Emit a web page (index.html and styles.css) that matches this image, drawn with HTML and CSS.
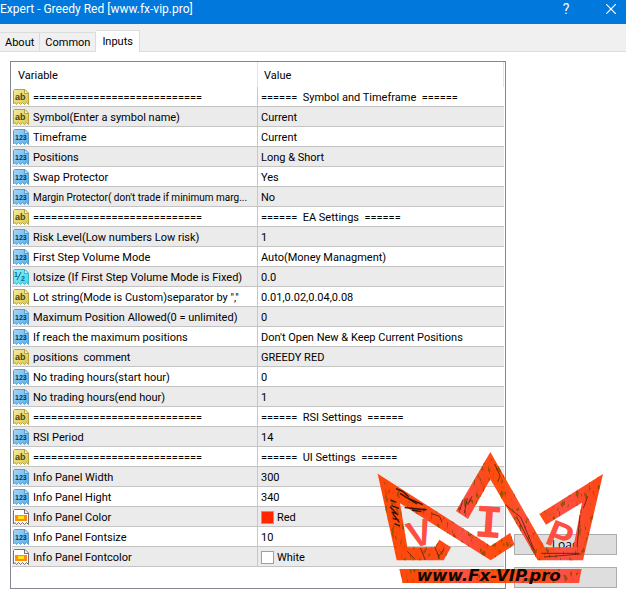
FILE: index.html
```html
<!DOCTYPE html>
<html lang="en">
<head>
<meta charset="utf-8">
<title>Expert - Greedy Red</title>
<link rel="stylesheet" href="styles.css">
</head>
<body>
<svg class="defs" aria-hidden="true">
  <defs>
    <linearGradient id="gy" x2="1" y2="1"><stop offset="0" stop-color="#f3eba0"/><stop offset="1" stop-color="#dcc64a"/></linearGradient>
    <linearGradient id="gb" x2="1" y2="1"><stop offset="0" stop-color="#a5d8fa"/><stop offset="1" stop-color="#55aee9"/></linearGradient>
    <linearGradient id="gc" x2="1" y2="1"><stop offset="0" stop-color="#8eeefa"/><stop offset="1" stop-color="#3fd6f2"/></linearGradient>
    <symbol id="ab" viewBox="0 0 16 16">
      <path d="M1.500 .5H12L15.500 4V15.500L13.500 13.500L11.500 15.500L9.500 13.500L7.500 15.500L5.500 13.500L3.500 15.500L2 13.500L.5 15V1.500Z" fill="url(#gy)" stroke="#b8a43c"/>
      <path d="M11.500 1V4.500H15" fill="#fbf6c5" stroke="#b8a43c"/>
      <text x="2" y="11" class="glyph brown">ab</text>
    </symbol>
    <symbol id="int" viewBox="0 0 16 16">
      <path d="M1.500 .5H12L15.500 4V15.500L13.500 13.500L11.500 15.500L9.500 13.500L7.500 15.500L5.500 13.500L3.500 15.500L2 13.500L.5 15V1.500Z" fill="url(#gb)" stroke="#5c9cc9"/>
      <path d="M11.500 1V4.500H15" fill="#c5e7fc" stroke="#5c9cc9"/>
      <text x="2" y="11" class="glyph navy">123</text>
    </symbol>
    <symbol id="dbl" viewBox="0 0 16 16">
      <path d="M1.500 .5H12L15.500 4V15.500L13.500 13.500L11.500 15.500L9.500 13.500L7.500 15.500L5.500 13.500L3.500 15.500L2 13.500L.5 15V1.500Z" fill="url(#gc)" stroke="#40b4cc"/>
      <path d="M11.500 1V4.500H15" fill="#c8f8fd" stroke="#40b4cc"/>
      <text x="1" y="8" class="glyph teal">1</text><path d="M4 11L8 3" stroke="#0a6780"/><text x="8" y="12" class="glyph teal">2</text>
    </symbol>
    <symbol id="col" viewBox="0 0 16 16">
      <path d="M1.500 .5H12L15.500 4V15.500L13.500 13.500L11.500 15.500L9.500 13.500L7.500 15.500L5.500 13.500L3.500 15.500L2 13.500L.5 15V1.500Z" fill="#fff" stroke="#777070"/>
      <path d="M11.500 1V4.500H15" fill="#eee" stroke="#777070"/>
      <path d="M2 6H14V12H2Z" fill="#ff8d0a"/><path d="M5 7H11V10H5Z" fill="#ffe21a"/>
    </symbol>
  </defs>
</svg>

<header class="titlebar">
  <h1>Expert - Greedy Red [www.fx-vip.pro]</h1>
  <button type="button" class="help" aria-label="Help">?</button>
  <button type="button" class="close" aria-label="Close"><svg viewBox="0 0 10 10"><path d="M0 0L10 10M10 0L0 10" stroke="#fff" stroke-width="1.200"/></svg></button>
</header>
<nav class="tabs" role="tablist">
  <button type="button" role="tab">About</button>
  <button type="button" role="tab">Common</button>
  <button type="button" role="tab" class="active" aria-selected="true">Inputs</button>
</nav>

<main>
  <div class="panel">
    <table>
      <thead><tr><th>Variable</th><th>Value</th></tr></thead>
      <tbody>
        <tr><td><svg><use href="#ab"/></svg>============================</td><td>======  Symbol and Timeframe  ======</td></tr>
        <tr><td><svg><use href="#ab"/></svg>Symbol(Enter a symbol name)</td><td>Current</td></tr>
        <tr><td><svg><use href="#int"/></svg>Timeframe</td><td>Current</td></tr>
        <tr><td><svg><use href="#int"/></svg>Positions</td><td>Long &amp; Short</td></tr>
        <tr><td><svg><use href="#int"/></svg>Swap Protector</td><td>Yes</td></tr>
        <tr><td><svg><use href="#int"/></svg><span class="long">Margin Protector( don't trade if minimum marg...</span></td><td>No</td></tr>
        <tr><td><svg><use href="#ab"/></svg>============================</td><td>======  EA Settings  ======</td></tr>
        <tr><td><svg><use href="#int"/></svg>Risk Level(Low numbers Low risk)</td><td>1</td></tr>
        <tr><td><svg><use href="#int"/></svg>First Step Volume Mode</td><td>Auto(Money Managment)</td></tr>
        <tr><td><svg><use href="#dbl"/></svg>lotsize (If First Step Volume Mode is Fixed)</td><td>0.0</td></tr>
        <tr><td><svg><use href="#ab"/></svg>Lot string(Mode is Custom)separator by ","</td><td>0.01,0.02,0.04,0.08</td></tr>
        <tr><td><svg><use href="#int"/></svg>Maximum Position Allowed(0 = unlimited)</td><td>0</td></tr>
        <tr><td><svg><use href="#int"/></svg>If reach the maximum positions</td><td>Don't Open New &amp; Keep Current Positions</td></tr>
        <tr><td><svg><use href="#ab"/></svg>positions  comment</td><td>GREEDY RED</td></tr>
        <tr><td><svg><use href="#int"/></svg>No trading hours(start hour)</td><td>0</td></tr>
        <tr><td><svg><use href="#int"/></svg>No trading hours(end hour)</td><td>1</td></tr>
        <tr><td><svg><use href="#ab"/></svg>============================</td><td>======  RSI Settings  ======</td></tr>
        <tr><td><svg><use href="#int"/></svg>RSI Period</td><td>14</td></tr>
        <tr><td><svg><use href="#ab"/></svg>============================</td><td>======  UI Settings  ======</td></tr>
        <tr><td><svg><use href="#int"/></svg>Info Panel Width</td><td>300</td></tr>
        <tr><td><svg><use href="#int"/></svg>Info Panel Hight</td><td>340</td></tr>
        <tr><td><svg><use href="#col"/></svg>Info Panel Color</td><td><i class="swatch red"></i>Red</td></tr>
        <tr><td><svg><use href="#int"/></svg>Info Panel Fontsize</td><td>10</td></tr>
        <tr><td><svg><use href="#col"/></svg>Info Panel Fontcolor</td><td><i class="swatch"></i>White</td></tr>
      </tbody>
    </table>
  </div>
  <aside class="actions">
    <button type="button">Load</button>
    <button type="button" aria-label="Save"></button>
  </aside>

  <svg class="crown" viewBox="0 0 768 471" role="img" aria-label="VIP crown">
    <defs>
      <filter id="worn" x="0" y="0" width="1" height="1">
        <feTurbulence type="fractalNoise" baseFrequency=".11 .04" numOctaves="4" seed="8" result="n"/>
        <feColorMatrix in="n" values="0 0 0 0 .35  0 0 0 0 .08  0 0 0 0 0  9 0 0 0 -5.400" result="d"/>
        <feComposite in="d" in2="SourceGraphic" operator="in" result="m"/>
        <feMerge><feMergeNode in="SourceGraphic"/><feMergeNode in="m"/></feMerge>
      </filter>
      <linearGradient id="flame" gradientUnits="userSpaceOnUse" x1="20" y1="0" x2="700" y2="0">
        <stop offset="0" stop-color="#ff4708"/><stop offset=".28" stop-color="#ff4a16"/><stop offset=".38" stop-color="#ff5046"/><stop offset=".47" stop-color="#ff4a20"/><stop offset=".55" stop-color="#ff4e08"/><stop offset=".65" stop-color="#ff4f42"/><stop offset=".72" stop-color="#ff4a10"/><stop offset=".82" stop-color="#ff5048"/><stop offset="1" stop-color="#ff4510"/>
      </linearGradient>
    </defs>
    <g filter="url(#worn)" fill="url(#flame)">
      <path d="M23 101L362 318L420 279L434 314L362 361L90 190L112 322H195L208 299L243 322L221 361H80Z"/>
      <path d="M361 36L524 322H610L636 188L528 254L508 222L699 102L639 361H503L361 118L294 237L258 213Z"/>
      <path d="M88 387H635L627 429H98Z"/>
    </g>
    <g stroke="#35130a" fill="none" stroke-width="2">
      <path d="M78 146L98 154L116 170M90 160L141 192M120 204L166 210M104 170L158 194M104 203L170 209M126 210L154 215" stroke-width="4"/>
      <path d="M61 180L79 187M64 197L87 205M65 216L85 223M68 235L86 240M73 251L90 258M60 200L84 225M68 220L88 247" stroke-width="4"/>
      <path d="M185 221L209 229L216 247M151 324L166 360M194 320L209 356M222 328L205 350M112 334L135 358M374 72L390 107L384 125M406 194L453 233L493 331M440 230L488 326M278 179L270 211M292 174L283 219M306 169L293 195M514 340H628M522 351L632 342M630 225L621 320M653 169L640 205"/>
    </g>
    <g fill="#ff4e42" class="vip">
      <text transform="translate(124 327) rotate(-16)">V</text>
      <text x="315" y="292" class="slab" transform="rotate(4 360 240)">I</text>
      <text transform="translate(521 308) rotate(22)">P</text>
    </g>
    <text x="140" y="423" class="site">www.Fx-VIP.pro</text>
  </svg>
</main>
</body>
</html>
```
FILE: styles.css
```css
* { box-sizing: border-box; }
body { margin: 0; background: #fff; color: #000; font: 11px/16px Roboto, "Liberation Sans", sans-serif; }
button { font: inherit; color: inherit; padding: 0; border: 0; }
.defs { position: absolute; width: 0; height: 0; }
.titlebar { display: flex; height: 24px; background: #0078dc; color: #fff; }
.titlebar h1 { flex: 1; margin: 0; font: 12px/18px Roboto, sans-serif; }
.titlebar button { width: 30px; height: 18px; background: none; }
.titlebar .help { margin-right: 15px; font-size: 14px; }
.titlebar .close svg { display: block; width: 10px; height: 10px; margin: 0 auto; }
.tabs { display: flex; align-items: flex-end; height: 28px; background: #f0f0f0; border-bottom: 1px solid #dcdcdc; }
.tabs button { height: 19px; padding: 2px 5px 0; border: 1px solid #dcdcdc; border-width: 1px 1px 0 0; background: #f0f0f0; }
.tabs .active { height: 22px; margin-bottom: -1px; padding: 0 6px; background: #fff; }
main { position: relative; display: grid; grid-template-columns: 1fr 103px; gap: 8px; padding: 9px 9px 8px 10px; }
.panel { border: 1px solid #828790; padding: 0 1px 21px; }
table { width: 100%; table-layout: fixed; border-collapse: separate; border-spacing: 0; }
th { height: 25px; padding: 2px 6px 0; text-align: left; font-weight: normal; border-right: 1px solid #e5e5e5; }
th:first-child { width: 246px; }
td { height: 20px; padding: 3px 3px 0; border-bottom: 1px solid #c4c4c4; white-space: pre; overflow: hidden; }
td:first-child { padding-left: 1px; padding-right: 0; border-right: 1px solid #c8c8c8; }
tr:nth-child(even) td { background: #ebebeb; }
td svg { width: 16px; height: 16px; margin: -6px 4px -4px 0; vertical-align: middle; }
.long { font-size: 10px; line-height: 1; }
.glyph { font: bold 8px "Liberation Sans", sans-serif; }
.glyph.brown { font-size: 9px; fill: #4d420c; }
.glyph.navy { font-size: 7px; fill: #08324f; }
.glyph.teal { font-size: 7px; fill: #0a6780; }
.swatch { display: inline-block; width: 13px; height: 13px; margin: -4px 3px -2px 0; border: 1px solid #a0a0a0; background: #fff; vertical-align: middle; }
.swatch.red { background: #ff2600; }
.actions { display: flex; flex-direction: column; justify-content: flex-end; gap: 12px; padding-bottom: 1px; }
.actions button { height: 21px; border: 1px solid #adadad; background: #dedede; font: 12px/19px "Open Sans", sans-serif; }
.crown { position: absolute; right: 0; bottom: 0; width: 256px; height: 157px; pointer-events: none; }
.vip { font: bold 112px "Liberation Sans", sans-serif; }
.slab { font-family: "Liberation Mono", monospace; font-size: 140px; }
.site { font: italic bold 50px "DejaVu Sans", sans-serif; fill: #120800; }
```
